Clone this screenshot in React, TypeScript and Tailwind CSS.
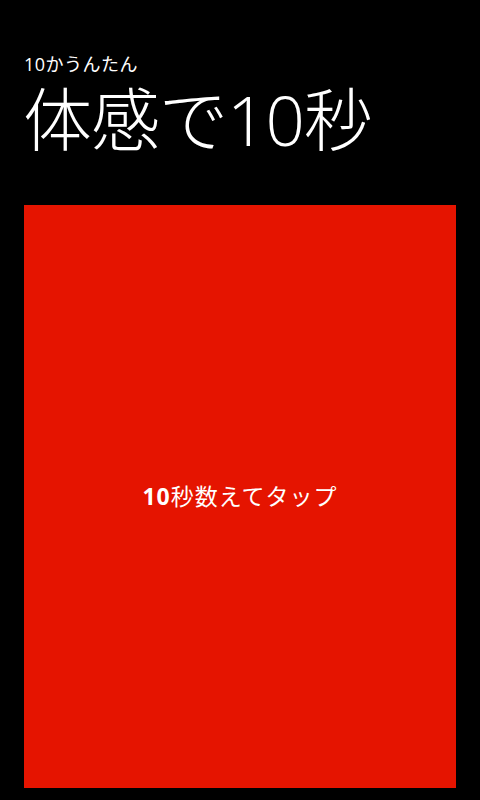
export default function App() {
  return (
    <div
      className="w-[480px] h-[800px] bg-black text-white flex flex-col overflow-hidden"
      style={{ fontFamily: '"Open Sans", "Noto Sans CJK JP", sans-serif' }}
    >
      {/* ヘッダー */}
      <div className="pl-[24px] pt-[53px]">
        <p className="text-[18px] leading-[22px] tracking-[0.5px]">10かうんたん</p>
        <h1 className="mt-[6px] text-[69px] leading-[76px] font-light -ml-[1px] tracking-[-1px]">体感で10秒</h1>
      </div>

      {/* タップエリア */}
      <div className="mx-[24px] mt-[48px] mb-[12px] flex-1 bg-[#e51400] flex items-center justify-center">
        <p className="text-[23px] tracking-[1px]">
          <span className="font-bold">10</span>秒数えてタップ
        </p>
      </div>
    </div>
  );
}
